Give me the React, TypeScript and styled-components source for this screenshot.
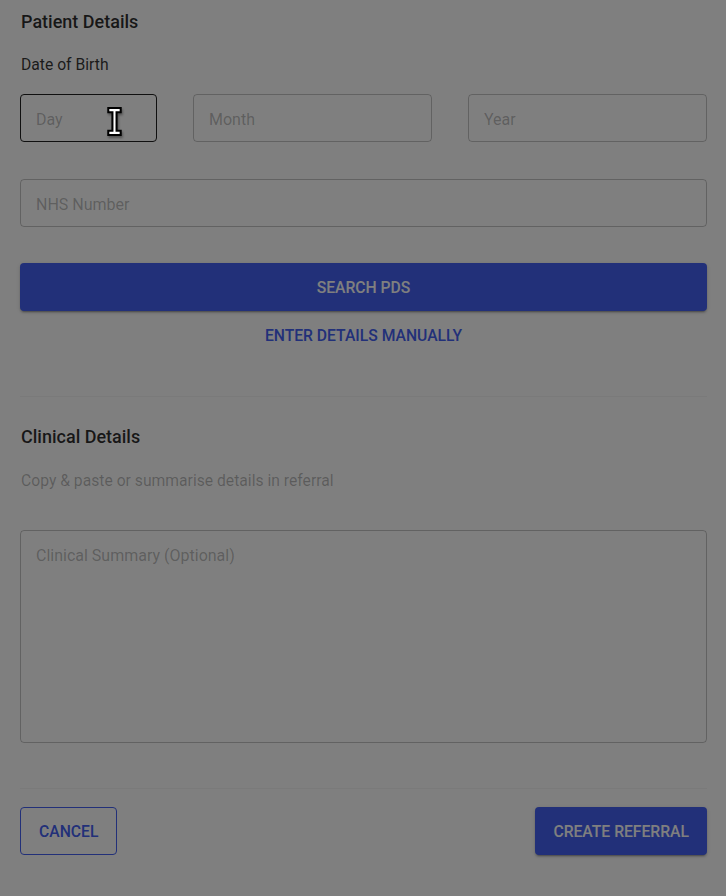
import React from "react";
import styled, { createGlobalStyle } from "styled-components";

const Global = createGlobalStyle`
  html, body { margin: 0; padding: 0; background: #ffffff; }
  body { font-family: Roboto, "Liberation Sans", sans-serif; }
  * { box-sizing: border-box; }
`;

const PRIMARY = "#4461f2";

const Page = styled.div`
  position: relative;
  width: 726px;
  height: 896px;
  overflow: hidden;
  background: #ffffff;
`;

const Form = styled.div`
  display: flex;
  flex-direction: column;
  padding: 0 19px 0 20px;
`;

const SectionTitle = styled.h2<{ $top: number }>`
  margin: ${(p) => p.$top}px 0 0 1px;
  font-size: 18px;
  line-height: 24px;
  font-weight: 500;
  color: rgba(0, 0, 0, 0.82);
`;

const Label = styled.div<{ $muted?: boolean; $top: number }>`
  margin: ${(p) => p.$top}px 0 0 1px;
  font-size: 15.7px;
  line-height: 22px;
  color: ${(p) => (p.$muted ? "rgba(0,0,0,0.28)" : "rgba(0,0,0,0.8)")};
`;

const Row = styled.div<{ $top: number }>`
  display: flex;
  gap: 36px;
  margin-top: ${(p) => p.$top}px;
`;

const Field = styled.input<{ $width?: number; $active?: boolean }>`
  flex: ${(p) => (p.$width ? `0 0 ${p.$width}px` : "1 1 0")};
  min-width: 0;
  height: 48px;
  padding: 2px 15px 0;
  border-radius: 4px;
  border: 1px solid ${(p) => (p.$active ? "rgba(0,0,0,0.87)" : "rgba(0,0,0,0.23)")};
  font-family: Roboto, "Liberation Sans", sans-serif;
  font-size: 16px;
  color: rgba(0, 0, 0, 0.87);
  background: transparent;
  outline: none;
  &::placeholder { color: rgba(0, 0, 0, 0.27); }
`;

const TextArea = styled.textarea`
  margin-top: 38px;
  height: 213px;
  padding: 14px 15px;
  border-radius: 4px;
  border: 1px solid rgba(0, 0, 0, 0.23);
  font-family: Roboto, "Liberation Sans", sans-serif;
  font-size: 16px;
  line-height: 22px;
  resize: none;
  background: transparent;
  outline: none;
  &::placeholder { color: rgba(0, 0, 0, 0.27); }
`;

const Button = styled.button<{ $variant: "contained" | "outlined" | "text"; $full?: boolean }>`
  height: 48px;
  padding: 0 ${(p) => (p.$variant === "outlined" ? 18 : 17)}px;
  border-radius: 4px;
  font-family: Roboto, "Liberation Sans", sans-serif;
  font-size: 15.7px;
  font-weight: 500;
  letter-spacing: 0;
  text-transform: uppercase;
  cursor: pointer;
  width: ${(p) => (p.$full ? "100%" : "auto")};
  border: 1px solid ${(p) => (p.$variant === "outlined" ? PRIMARY : "transparent")};
  background: ${(p) => (p.$variant === "contained" ? PRIMARY : "transparent")};
  color: ${(p) => (p.$variant === "contained" ? "#ffffff" : PRIMARY)};
  box-shadow: ${(p) =>
    p.$variant === "contained"
      ? "0px 3px 1px -2px rgba(0,0,0,0.2), 0px 2px 2px 0px rgba(0,0,0,0.14), 0px 1px 5px 0px rgba(0,0,0,0.12)"
      : "none"};
`;

const Block = styled.div<{ $top: number }>`
  margin-top: ${(p) => p.$top}px;
  display: flex;
  justify-content: center;
`;

const Divider = styled.hr<{ $top: number }>`
  margin: ${(p) => p.$top}px 0 0 0;
  border: none;
  border-top: 1px solid rgba(0, 0, 0, 0.04);
`;

const Actions = styled.div`
  margin-top: 18px;
  display: flex;
  justify-content: space-between;
`;

const Overlay = styled.div`
  position: absolute;
  inset: 0;
  background: rgba(0, 0, 0, 0.5);
`;

const Cursor = styled.svg`
  position: absolute;
  left: 105px;
  top: 106px;
  filter: drop-shadow(1px 2px 1px rgba(0, 0, 0, 0.35));
`;

export default function App() {
  return (
    <Page>
      <Global />
      <Form>
        <SectionTitle $top={10}>Patient Details</SectionTitle>
        <Label $top={20}>Date of Birth</Label>
        <Row $top={18}>
          <Field $width={137} $active placeholder="Day" />
          <Field placeholder="Month" />
          <Field placeholder="Year" />
        </Row>
        <Row $top={37}>
          <Field placeholder="NHS Number" />
        </Row>
        <Block $top={36}>
          <Button $variant="contained" $full>Search PDS</Button>
        </Block>
        <Block $top={0}>
          <Button $variant="text">Enter details manually</Button>
        </Block>
        <Divider $top={37} />
        <SectionTitle $top={28}>Clinical Details</SectionTitle>
        <Label $muted $top={21}>Copy &amp; paste or summarise details in referral</Label>
        <TextArea placeholder="Clinical Summary (Optional)" />
        <Divider $top={45} />
        <Actions>
          <Button $variant="outlined">Cancel</Button>
          <Button $variant="contained">Create Referral</Button>
        </Actions>
      </Form>
      <Overlay />
      <Cursor width="19" height="31" viewBox="0 0 18 30">
        <path
          d="M3 2 H15 V6 H11 V24 H15 V28 H3 V24 H7 V6 H3 Z"
          fill="#ffffff"
          stroke="#000000"
          strokeWidth="2"
          strokeLinejoin="miter"
        />
      </Cursor>
    </Page>
  );
}
